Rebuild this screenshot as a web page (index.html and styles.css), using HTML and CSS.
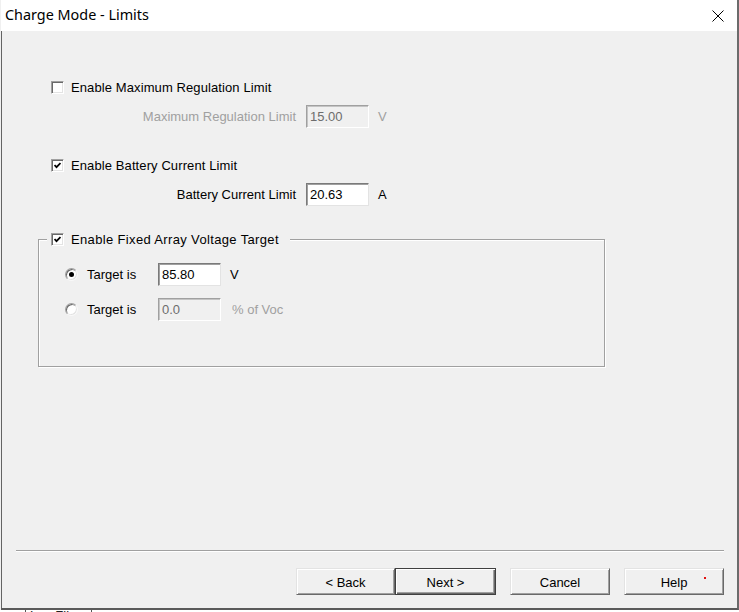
FILE: index.html
```html
<!DOCTYPE html>
<html>
<head>
<meta charset="utf-8">
<title>Charge Mode - Limits</title>
<link rel="stylesheet" href="styles.css">
</head>
<body>
<div class="screen">
  <div class="window">
    <div class="titlebar">
      <span class="title">Charge Mode - Limits</span>
      <svg class="close" width="12" height="12" viewBox="0 0 12 12"><path d="M0.5 0.5 L11.5 11.5 M11.5 0.5 L0.5 11.5" stroke="#000" stroke-width="1" fill="none"/></svg>
    </div>
    <div class="body">
      <div class="row check-row first">
        <span class="checkbox"></span>
        <span class="label">Enable Maximum Regulation Limit</span>
      </div>
      <div class="row field-row disabled">
        <span class="flabel">Maximum Regulation Limit</span>
        <span class="input off">15.00</span>
        <span class="unit">V</span>
      </div>
      <div class="row check-row second">
        <span class="checkbox checked"><svg width="7" height="7" viewBox="0 0 7 7"><polyline points="0.5,3 2.5,5.2 6.5,1" fill="none" stroke="#000" stroke-width="1.8"/></svg></span>
        <span class="label">Enable Battery Current Limit</span>
      </div>
      <div class="row field-row">
        <span class="flabel">Battery Current Limit</span>
        <span class="input">20.63</span>
        <span class="unit">A</span>
      </div>
      <div class="group">
        <div class="legend">
          <span class="checkbox checked"><svg width="7" height="7" viewBox="0 0 7 7"><polyline points="0.5,3 2.5,5.2 6.5,1" fill="none" stroke="#000" stroke-width="1.8"/></svg></span>
          <span class="label wide">Enable Fixed Array Voltage Target</span>
        </div>
        <div class="row radio-row r1">
          <span class="radio selected"><span class="dot"></span></span>
          <span class="rlabel">Target is</span>
          <span class="input small">85.80</span>
          <span class="unit">V</span>
        </div>
        <div class="row radio-row r2">
          <span class="radio"></span>
          <span class="rlabel">Target is</span>
          <span class="input small off">0.0</span>
          <span class="unit dim">% of Voc</span>
        </div>
      </div>
      <div class="separator"></div>
      <div class="buttons">
        <span class="btn back">&lt; Back</span>
        <span class="btn next">Next &gt;</span>
        <span class="btn cancel">Cancel</span>
        <span class="btn help">Help<span class="reddot"></span></span>
      </div>
    </div>
  </div>
  <div class="strip"><span class="tab">Log Files</span></div>
</div>
</body>
</html>
```
FILE: styles.css
```css
* { box-sizing: border-box; }
html, body { margin: 0; padding: 0; }
body {
  background: #f0f0f0;
  font-family: "Liberation Sans", Arial, sans-serif;
  font-size: 13px;
  color: #000;
}
.screen {
  width: 739px;
  height: 612px;
  overflow: hidden;
  background: #f0f0f0;
}
.window {
  margin-left: 1px;
  width: 738px;
  height: 610px;
  border-right: 2px solid #6b6b6b;
  border-bottom: 2px solid #5a5a5a;
  display: flex;
  flex-direction: column;
  background: #f0f0f0;
}
.titlebar {
  height: 31px;
  flex: none;
  background: #fff;
  display: flex;
  align-items: center;
  justify-content: space-between;
  padding: 0 13px 1px 4px;
}
.title {
  font-family: "Noto Sans", "Open Sans", sans-serif;
  font-size: 14.4px;
  color: #000;
  line-height: 20px;
}
.close { display: block; margin-top: 1px; }
.body {
  flex: 1;
  border-left: 1px solid #646464;
  display: flex;
  flex-direction: column;
}
.row {
  display: flex;
  align-items: center;
}
.check-row { height: 20px; margin-left: 49px; }
.check-row.first { margin-top: 46px; }
.check-row.second { margin-top: 27px; }
.field-row { height: 23px; margin-top: 8px; }
.checkbox {
  width: 13px;
  height: 13px;
  flex: none;
  background: #fff;
  border: 1px solid;
  border-color: #a0a0a0 #fff #fff #a0a0a0;
  box-shadow: inset 1px 1px 0 #696969, inset -1px -1px 0 #e3e3e3;
  display: flex;
  align-items: center;
  justify-content: center;
  margin-right: 7px;
}
.checkbox svg { display: block; margin: 1px 0 0 0; }
.label { white-space: nowrap; letter-spacing: 0.1px; }
.label.wide { letter-spacing: 0.35px; }
.flabel {
  width: 294px;
  text-align: right;
  white-space: nowrap;
  margin-right: 10px;
}
.disabled .flabel, .disabled .unit, .dim { color: #a0a0a0; }
.input {
  width: 63px;
  height: 23px;
  flex: none;
  background: #fff;
  border: 1px solid;
  border-color: #7a7a7a #e3e3e3 #e3e3e3 #7a7a7a;
  box-shadow: inset 1px 1px 0 #a0a0a0;
  padding: 0 0 0 3px;
  display: flex;
  align-items: center;
  line-height: 14px;
}
.input.off {
  background: #f0f0f0;
  color: #6d6d6d;
  border-color: #a0a0a0 #fff #fff #a0a0a0;
  box-shadow: inset 1px 1px 0 #c4c4c4;
}
.unit { margin-left: 9px; white-space: nowrap; }
.unit.dim { margin-left: 11px; }
.group {
  margin: 33px 0 0 36px;
  width: 567px;
  height: 128px;
  border: 1px solid #a0a0a0;
  box-shadow: 1px 1px 0 #fff, inset 1px 1px 0 #fff;
  display: flex;
  flex-direction: column;
  align-items: flex-start;
}
.legend {
  margin: -11px 0 0 8px;
  height: 20px;
  padding: 0 11px 0 4px;
  background: #f0f0f0;
  display: flex;
  align-items: center;
}
.radio-row { height: 23px; margin-left: 26px; }
.radio-row.r1 { margin-top: 14px; }
.radio-row.r2 { margin-top: 12px; }
.radio {
  width: 13px;
  height: 13px;
  flex: none;
  border-radius: 50%;
  background: #fff;
  border: 1px solid;
  border-color: #a0a0a0 #f8f8f8 #f8f8f8 #a0a0a0;
  box-shadow: inset 1px 1px 0 #696969, inset -1px -1px 0 #e3e3e3;
  display: flex;
  align-items: center;
  justify-content: center;
  margin-right: 9px;
}
.dot {
  width: 5px;
  height: 5px;
  border-radius: 50%;
  background: #000;
}
.rlabel { width: 71px; white-space: nowrap; }
.separator {
  margin: 183px 0 0 14px;
  width: 708px;
  height: 2px;
  border-top: 1px solid #a0a0a0;
  border-bottom: 1px solid #fff;
}
.buttons {
  display: flex;
  margin: 16px 0 0 294px;
  height: 27px;
}
.btn {
  position: relative;
  width: 100px;
  height: 27px;
  display: flex;
  align-items: center;
  justify-content: center;
  background: #f0f0f0;
  border: 1px solid;
  border-color: #e3e3e3 #696969 #696969 #e3e3e3;
  box-shadow: inset 1px 1px 0 #fff, inset -1px -1px 0 #a0a0a0;
  padding-top: 1px;
}
.btn.back { width: 99px; }
.btn.next {
  width: 101px;
  border: 1px solid #404040;
  box-shadow: inset 1px 1px 0 #fff, inset -1px -1px 0 #696969, inset -2px -2px 0 #a0a0a0;
}
.btn.cancel { margin-left: 14px; }
.btn.help { margin-left: 14px; }
.reddot {
  position: absolute;
  left: 79px;
  top: 8px;
  width: 2px;
  height: 2px;
  background: #e01010;
}
.strip {
  height: 2px;
  overflow: hidden;
  background: #fff;
  padding-left: 24px;
  border-left: 1px solid #fff;
}
.tab {
  display: inline-block;
  font-size: 13px;
  line-height: 13px;
  margin-top: -1px;
  color: #222;
  border-left: 1px solid #555;
  border-right: 1px solid #555;
  padding: 0 8px 0 4px;
  vertical-align: top;
}
```
